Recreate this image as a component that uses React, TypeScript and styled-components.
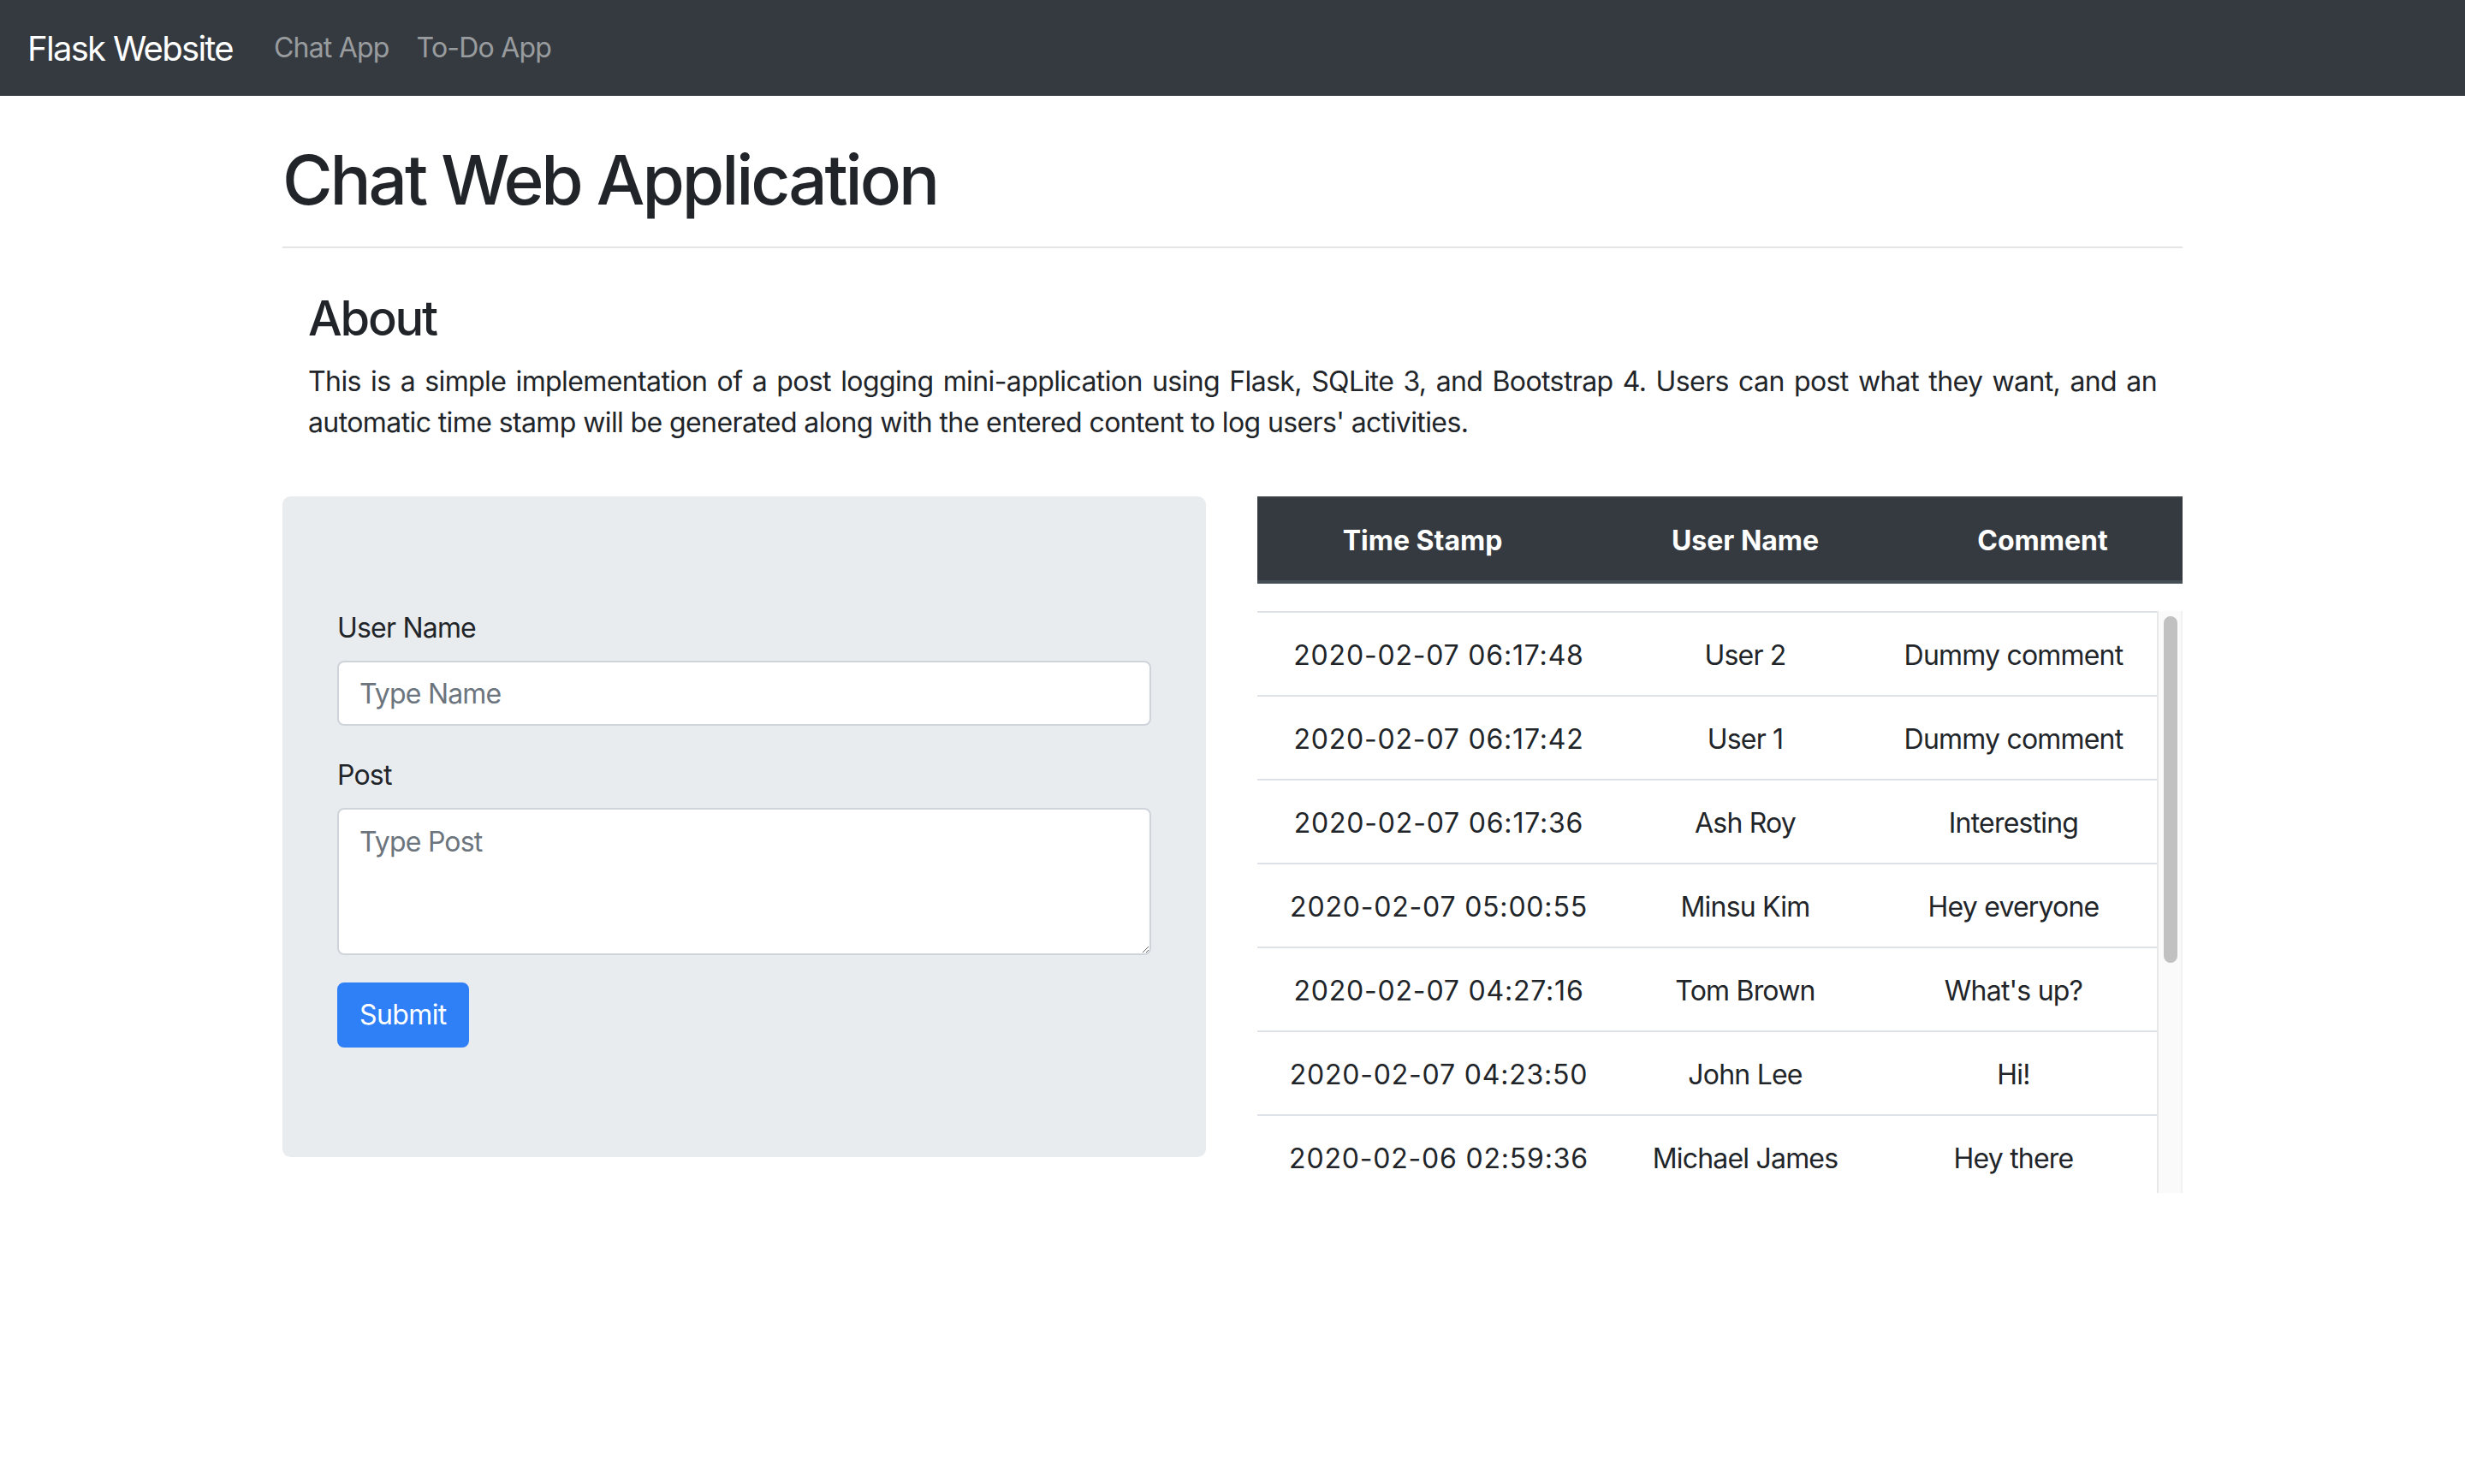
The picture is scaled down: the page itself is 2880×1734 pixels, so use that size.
import React from "react";
import styled, { createGlobalStyle } from "styled-components";

const GlobalStyle = createGlobalStyle`
  * { box-sizing: border-box; }
  body {
    margin: 0;
    background: #ffffff;
    color: #212529;
    font-family: Inter, "Noto Sans", "Liberation Sans", sans-serif;
    font-size: 32px;
    line-height: 1.5;
    letter-spacing: -0.7px;
  }
`;

const NavBar = styled.nav`
  height: 112px;
  background: #343a40;
  padding: 0 32px;
  display: flex;
  align-items: center;
`;

const Brand = styled.a`
  font-size: 40px;
  line-height: 60px;
  color: #ffffff;
  margin-right: 32px;
  text-decoration: none;
  letter-spacing: -1.7px;
  padding-top: 2px;
`;

const NavLink = styled.a`
  font-size: 32px;
  line-height: 48px;
  color: rgba(255, 255, 255, 0.5);
  padding: 0 16px;
  text-decoration: none;
  letter-spacing: -0.8px;
`;

const Container = styled.main`
  width: 2220px;
  margin: 0 auto;
`;

const Title = styled.h1`
  margin: 50px 0 0;
  font-size: 80px;
  font-weight: 500;
  line-height: 96px;
  letter-spacing: -3.1px;
`;

const Divider = styled.hr`
  margin: 30px 0 0;
  border: 0;
  border-top: 2px solid rgba(0, 0, 0, 0.1);
`;

const About = styled.section`
  padding: 49px 30px 0;
`;

const SubTitle = styled.h3`
  margin: 0 0 16px;
  font-size: 56px;
  font-weight: 500;
  line-height: 67px;
  letter-spacing: -2.2px;
`;

const Paragraph = styled.p`
  margin: 0;
  text-align: justify;
  line-height: 48px;
  letter-spacing: -0.6px;
`;

const Row = styled.div`
  display: grid;
  grid-template-columns: 1fr 1fr;
  gap: 60px;
  margin-top: 62px;
  align-items: start;
`;

const Jumbotron = styled.div`
  background: #e9ecef;
  border-radius: 9.6px;
  padding: 128px 64px;
`;

const FormGroup = styled.div`
  margin-bottom: 32px;
`;

const Label = styled.label`
  display: inline-block;
  padding-top: 2px;
  margin-bottom: 14px;
  line-height: 48px;
  letter-spacing: -0.8px;
`;

const fieldCss = `
  display: block;
  width: 100%;
  padding: 12px 24px;
  font-family: Inter, "Noto Sans", "Liberation Sans", sans-serif;
  font-size: 32px;
  line-height: 48px;
  letter-spacing: -0.8px;
  color: #495057;
  background: #ffffff;
  border: 2px solid #ced4da;
  border-radius: 8px;
  outline: none;
  &::placeholder { color: #6c757d; opacity: 1; }
`;

const Input = styled.input`
  ${fieldCss}
  height: 76px;
`;

const TextArea = styled.textarea`
  ${fieldCss}
  height: 172px;
  padding-top: 14px;
  resize: vertical;
`;

const SubmitButton = styled.button`
  font-family: Inter, "Noto Sans", "Liberation Sans", sans-serif;
  font-size: 32px;
  line-height: 48px;
  letter-spacing: -0.6px;
  padding: 12px 24px;
  color: #ffffff;
  background: #2f7ff7;
  border: 2px solid #2f7ff7;
  border-radius: 8px;
`;

const TableColumn = styled.div``;

const Table = styled.table<{ $gap?: boolean }>`
  width: 100%;
  border-collapse: collapse;
  table-layout: fixed;
  margin-bottom: ${(p) => (p.$gap ? "32px" : "0")};
  text-align: center;
`;

const Col = styled.col<{ $w: number }>`
  width: ${(p) => p.$w}px;
`;

const HeadCell = styled.th`
  background: #343a40;
  color: #ffffff;
  font-weight: 700;
  letter-spacing: 0;
  padding: 26px 24px 22px;
  line-height: 48px;
  border-top: 2px solid #3b4147;
  border-bottom: 4px solid #454d55;
`;

const ScrollBox = styled.div`
  display: flex;
  height: 680px;
  overflow: hidden;
`;

const Viewport = styled.div`
  flex: 1;
  min-width: 0;
  overflow: hidden;
`;

const ScrollTrack = styled.div`
  flex: none;
  width: 30px;
  background: #fafafa;
  border-left: 2px solid #e9e9e9;
  border-right: 2px solid #f1f1f1;
  padding: 6px 4px 0 6px;
`;

const ScrollThumb = styled.div`
  width: 16px;
  height: 405px;
  border-radius: 8px;
  background: #c1c1c1;
`;

const Cell = styled.td<{ $mono?: boolean }>`
  padding: 26px 24px 22px;
  line-height: 48px;
  border-top: 2px solid #dee2e6;
  white-space: nowrap;
  letter-spacing: ${(p) => (p.$mono ? "0.8px" : "-0.8px")};
`;

const posts: [string, string, string][] = [
  ["2020-02-07 06:17:48", "User 2", "Dummy comment"],
  ["2020-02-07 06:17:42", "User 1", "Dummy comment"],
  ["2020-02-07 06:17:36", "Ash Roy", "Interesting"],
  ["2020-02-07 05:00:55", "Minsu Kim", "Hey everyone"],
  ["2020-02-07 04:27:16", "Tom Brown", "What's up?"],
  ["2020-02-07 04:23:50", "John Lee", "Hi!"],
  ["2020-02-06 02:59:36", "Michael James", "Hey there"],
];

export default function App() {
  return (
    <>
      <GlobalStyle />
      <NavBar>
        <Brand href="#">Flask Website</Brand>
        <NavLink href="#">Chat App</NavLink>
        <NavLink href="#">To-Do App</NavLink>
      </NavBar>
      <Container>
        <Title>Chat Web Application</Title>
        <Divider />
        <About>
          <SubTitle>About</SubTitle>
          <Paragraph>
            This is a simple implementation of a post logging mini-application using Flask, SQLite 3,
            and Bootstrap 4. Users can post what they want, and an automatic time stamp will be
            generated along with the entered content to log users' activities.
          </Paragraph>
        </About>
        <Row>
          <Jumbotron>
            <form onSubmit={(e) => e.preventDefault()}>
              <FormGroup>
                <Label>User Name</Label>
                <Input type="text" placeholder="Type Name" />
              </FormGroup>
              <FormGroup>
                <Label>Post</Label>
                <TextArea rows={3} placeholder="Type Post" />
              </FormGroup>
              <SubmitButton type="submit">Submit</SubmitButton>
            </form>
          </Jumbotron>
          <TableColumn>
            <Table $gap>
              <colgroup>
                <Col $w={386} />
                <Col $w={368} />
                <Col $w={327} />
              </colgroup>
              <thead>
                <tr>
                  <HeadCell>Time Stamp</HeadCell>
                  <HeadCell>User Name</HeadCell>
                  <HeadCell>Comment</HeadCell>
                </tr>
              </thead>
            </Table>
            <ScrollBox>
              <Viewport>
                <Table>
                  <colgroup>
                    <Col $w={424} />
                    <Col $w={292} />
                    <Col $w={335} />
                  </colgroup>
                  <tbody>
                    {posts.map(([time, user, comment]) => (
                      <tr key={time}>
                        <Cell $mono>{time}</Cell>
                        <Cell>{user}</Cell>
                        <Cell>{comment}</Cell>
                      </tr>
                    ))}
                  </tbody>
                </Table>
              </Viewport>
              <ScrollTrack>
                <ScrollThumb />
              </ScrollTrack>
            </ScrollBox>
          </TableColumn>
        </Row>
      </Container>
    </>
  );
}
